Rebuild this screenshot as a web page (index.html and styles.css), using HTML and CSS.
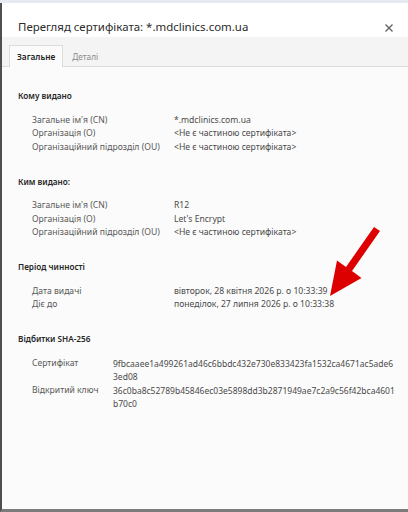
FILE: index.html
```html
<!DOCTYPE html>
<html lang="uk">
<head>
    <meta charset="UTF-8">
    <meta name="viewport" content="width=device-width, initial-scale=1.0">
    <title>Перегляд сертифіката</title>
    <link rel="stylesheet" href="styles.css">
</head>
<body>
    <div class="topbar"></div>
    <div class="dialog">
        <div class="dialog-header">
            <h1 class="dialog-title">Перегляд сертифіката: *.mdclinics.com.ua</h1>
            <button class="close-btn" title="Закрити">
                <svg width="10" height="10" viewBox="0 0 10 10">
                    <path d="M1.5 1.5L8.5 8.5M8.5 1.5L1.5 8.5" stroke="#5f5f5f" stroke-width="1.3" fill="none"/>
                </svg>
            </button>
        </div>
        <div class="tabs">
            <div class="tab active">Загальне</div>
            <div class="tab">Деталі</div>
        </div>
        <div class="content">
            <section class="section">
                <h2>Кому видано</h2>
                <div class="rows">
                    <div class="label">Загальне ім'я (CN)</div>
                    <div class="value">*.mdclinics.com.ua</div>
                    <div class="label">Організація (O)</div>
                    <div class="value">&lt;Не є частиною сертифіката&gt;</div>
                    <div class="label">Організаційний підрозділ (OU)</div>
                    <div class="value">&lt;Не є частиною сертифіката&gt;</div>
                </div>
            </section>
            <section class="section">
                <h2>Ким видано:</h2>
                <div class="rows">
                    <div class="label">Загальне ім'я (CN)</div>
                    <div class="value">R12</div>
                    <div class="label">Організація (O)</div>
                    <div class="value">Let's Encrypt</div>
                    <div class="label">Організаційний підрозділ (OU)</div>
                    <div class="value">&lt;Не є частиною сертифіката&gt;</div>
                </div>
            </section>
            <section class="section">
                <h2>Період чинності</h2>
                <div class="rows">
                    <div class="label">Дата видачі</div>
                    <div class="value">вівторок, 28 квітня 2026 р. о 10:33:39</div>
                    <div class="label">Діє до</div>
                    <div class="value">понеділок, 27 липня 2026 р. о 10:33:38</div>
                </div>
            </section>
            <section class="section">
                <h2>Відбитки SHA-256</h2>
                <div class="rows narrow">
                    <div class="label">Сертифікат</div>
                    <div class="value hash">9fbcaaee1a499261ad46c6bbdc432e730e833423fa1532ca4671ac5ade6<br>3ed08</div>
                    <div class="label">Відкритий ключ</div>
                    <div class="value hash">36c0ba8c52789b45846ec03e5898dd3b2871949ae7c2a9c56f42bca4601<br>b70c0</div>
                </div>
            </section>
        </div>
    </div>

    <!-- red pointer drawn on top of the dates -->
    <svg class="pointer" width="408" height="512" viewBox="0 0 408 512">
        <polygon points="374,227 380,231 352,271 361.5,278 330,296 337,260.5 346,267" fill="#dd0000"/>
    </svg>
</body>
</html>
```

FILE: styles.css
```css
* {
    margin: 0;
    padding: 0;
    box-sizing: border-box;
}

html, body {
    height: 100%;
}

body {
    background-color: #e8edf3;
    font-family: "Noto Sans", "Open Sans", Arial, sans-serif;
    color: #4a4a4a;
    display: flex;
    flex-direction: column;
    overflow: hidden;
}

.topbar {
    height: 3px;
    background-color: #e6ebf1;
}

.dialog {
    flex: 1;
    display: flex;
    flex-direction: column;
    background-color: #fbfbfb;
    border-left: 2px solid #4f4f4f;
    border-bottom: 3px solid #7c7c7c;
}

.dialog-header {
    display: flex;
    justify-content: space-between;
    align-items: center;
    height: 34px;
    padding: 15px 12px 1px 16px;
    background-color: #fff;
}

.dialog-title {
    font-size: 11.45px;
    font-weight: normal;
    color: #2b2b2b;
    line-height: 18px;
}

.close-btn {
    border: none;
    background: none;
    width: 14px;
    height: 14px;
    display: flex;
    align-items: center;
    justify-content: center;
    margin-top: 1px;
}

.tabs {
    display: flex;
    align-items: flex-end;
    gap: 1px;
    height: 30px;
    padding-left: 7px;
    background-color: #f4f4f4;
    border-bottom: 1px solid #dcdcdc;
}

.tab {
    font-size: 8.3px;
    line-height: 20px;
    padding: 0 8px;
    color: #8a8a8a;
    margin-bottom: -1px;
}

.tab.active {
    background-color: #fbfbfb;
    border: 1px solid #dcdcdc;
    border-bottom: none;
    color: #222;
    font-weight: 600;
    padding: 1px 7px 0;
}

.content {
    padding: 22px 12px 0 16px;
}

.section {
    margin-bottom: 20.5px;
}

.section h2 {
    font-size: 8.2px;
    font-weight: 600;
    color: #262626;
    line-height: 14px;
    margin-bottom: 10.5px;
}

.rows {
    display: grid;
    grid-template-columns: 142px 1fr;
    padding-left: 14px;
    font-size: 8.6px;
    line-height: 13.5px;
}

.rows.narrow {
    grid-template-columns: 81px 1fr;
}

.label {
    color: #595959;
    white-space: nowrap;
}

.value {
    color: #4a4a4a;
    white-space: nowrap;
}

.value.hash {
    font-size: 8.5px;
}

.pointer {
    position: absolute;
    left: 0;
    top: 0;
    pointer-events: none;
}
```
